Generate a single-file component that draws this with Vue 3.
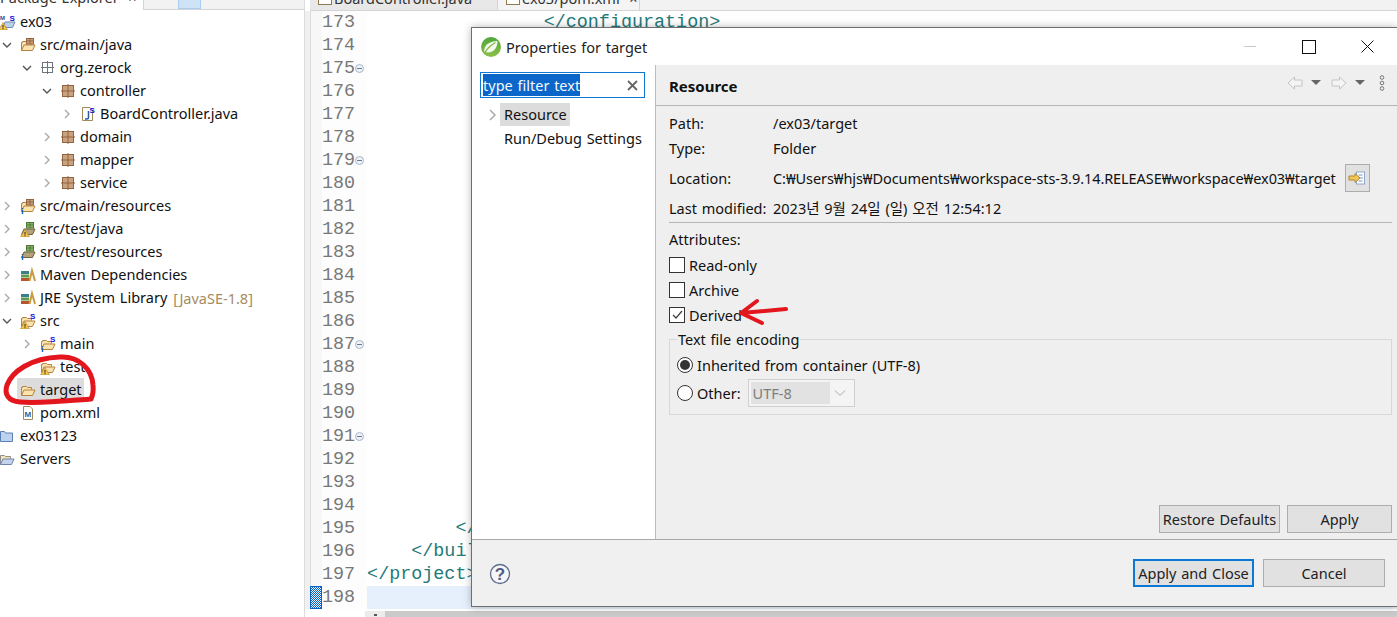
<script setup>
const tree = [
  { d: 0, t: 'ex03', i: 'project', chev: '' },
  { d: 1, t: 'src/main/java', i: 'srcopen', chev: 'down' },
  { d: 2, t: 'org.zerock', i: 'pkgempty', chev: 'down' },
  { d: 3, t: 'controller', i: 'pkg', chev: 'down' },
  { d: 4, t: 'BoardController.java', i: 'java', chev: 'right' },
  { d: 3, t: 'domain', i: 'pkg', chev: 'right' },
  { d: 3, t: 'mapper', i: 'pkg', chev: 'right' },
  { d: 3, t: 'service', i: 'pkg', chev: 'right' },
  { d: 1, t: 'src/main/resources', i: 'srcres', chev: 'right' },
  { d: 1, t: 'src/test/java', i: 'testwarn', chev: 'right' },
  { d: 1, t: 'src/test/resources', i: 'testres', chev: 'right' },
  { d: 1, t: 'Maven Dependencies', i: 'lib', chev: 'right' },
  { d: 1, t: 'JRE System Library', extra: '[JavaSE-1.8]', i: 'lib', chev: 'right' },
  { d: 1, t: 'src', i: 'srcfolder', chev: 'down' },
  { d: 2, t: 'main', i: 'mainfolder', chev: 'right' },
  { d: 2, t: 'test', i: 'testfolder', chev: '' },
  { d: 1, t: 'target', i: 'folder', chev: '', sel: true },
  { d: 1, t: 'pom.xml', i: 'pom', chev: '' },
  { d: 0, t: 'ex03123', i: 'bluefolder', chev: '' },
  { d: 0, t: 'Servers', i: 'servers', chev: '' }
]

const code = { 173: ['</configuration>', 16], 195: ['</', 8], 196: ['</buil', 4], 197: ['</project>', 0] }
const folds = [175, 179, 187, 191]
const lines = []
for (let n = 173; n <= 198; n++) {
  lines.push({ n, text: code[n] ? code[n][0] : '', indent: code[n] ? code[n][1] : 0, fold: folds.includes(n), cur: n === 198 })
}

const info = [
  { k: 'Path:', v: '/ex03/target', h: 25 },
  { k: 'Type:', v: 'Folder', h: 25 },
  { k: 'Location:', v: 'C:₩Users₩hjs₩Documents₩workspace-sts-3.9.14.RELEASE₩workspace₩ex03₩target', h: 35, btn: true },
  { k: 'Last modified:', v: '2023년 9월 24일 (일) 오전 12:54:12', h: 25 }
]
const checks = [
  { t: 'Read-only', on: false },
  { t: 'Archive', on: false },
  { t: 'Derived', on: true }
]
</script>

<template>
  <div class="screen">
    <svg class="defs" width="0" height="0" aria-hidden="true">
      <defs>
        <symbol id="open" viewBox="0 0 16 16">
          <path d="M1.500 13.500V5.500h1V4.500h4l1 1h4v2" fill="#f7e2b0" stroke="#b5823e" />
          <path d="M1.500 13.500 4 8h11l-2.500 5.500z" fill="#fbe3ae" stroke="#b5823e" />
        </symbol>
        <symbol id="grid" viewBox="0 0 16 16">
          <rect x="2.500" y="2.500" width="11" height="11" fill="#c9a27f" stroke="#93643f" />
          <path d="M8 1v14M1 8h14" stroke="#93643f" />
        </symbol>
        <symbol id="warn" viewBox="0 0 16 16">
          <path d="M5 8.500 9.500 16H.5z" fill="#f5c54c" stroke="#a9853a" stroke-width=".6" />
          <path d="M5 11v2.600M5 14.200v1" stroke="#222" />
        </symbol>
        <symbol id="inf" viewBox="0 0 16 16">
          <path d="M2.500 10v1M2.500 12v4" stroke="#1a62b8" stroke-width="1.400" />
        </symbol>
      </defs>
    </svg>

    <aside class="explorer">
      <div class="ptabs">
        <div class="ptab"><span class="ptab-text">Package Explorer&nbsp; ×</span></div>
        <div class="ptool"><span class="ptool-btn"></span></div>
      </div>
      <ul class="tree">
        <li v-for="row in tree" :key="row.t" class="row" :style="{ paddingLeft: 20 * Math.max(row.d - 1, 0) + 'px' }">
          <span v-if="row.d > 0" class="chev">
            <svg v-if="row.chev === 'down'" width="12" height="12" viewBox="0 0 12 12"><path d="M2 4l4 4 4-4" fill="none" stroke="#555" stroke-width="1.400" /></svg>
            <svg v-else-if="row.chev === 'right'" width="12" height="12" viewBox="0 0 12 12"><path d="M4 2l4 4-4 4" fill="none" stroke="#aaa" stroke-width="1.400" /></svg>
          </span>
          <span class="icon">
            <svg width="16" height="16" viewBox="0 0 16 16">
              <template v-if="row.i === 'project'">
                <path d="M3 13.500 5 8h10l-2.500 5.500z" fill="#bcd0ea" stroke="#6f8bb2" />
                <text x="0" y="6" class="mini" fill="#2c4f8f">M</text>
                <text x="9.500" y="6.500" class="badge">S</text>
                <use href="#warn" width="16" height="16" x="-2" y="0" />
              </template>
              <template v-else-if="row.i === 'srcopen'">
                <use href="#open" width="16" height="16" />
                <rect x="6.500" y="1.500" width="7" height="5.500" fill="#c9a27f" stroke="#93643f" />
                <path d="M10 1.500v5.500M6.500 4h7" stroke="#93643f" />
              </template>
              <template v-else-if="row.i === 'srcres'">
                <use href="#open" width="16" height="16" />
                <rect x="6.500" y="1.500" width="7" height="5.500" fill="#c9a27f" stroke="#93643f" />
                <path d="M10 1.500v5.500M6.500 4h7" stroke="#93643f" />
                <use href="#inf" width="16" height="16" />
              </template>
              <template v-else-if="row.i === 'testwarn' || row.i === 'testres'">
                <path d="M1.500 13.500 4 8h11l-2.500 5.500z" fill="#b3a27a" stroke="#71603c" />
                <rect x="6.500" y="1.500" width="7" height="5.500" fill="#8fb36b" stroke="#4f7a34" />
                <path d="M10 1.500v5.500M6.500 4h7" stroke="#4f7a34" />
                <use v-if="row.i === 'testwarn'" href="#warn" width="16" height="16" />
                <use v-else href="#inf" width="16" height="16" />
              </template>
              <template v-else-if="row.i === 'pkgempty'">
                <rect x="2.500" y="2.500" width="10" height="10" fill="none" stroke="#6e7480" />
                <path d="M7.500 1v13M1 7.500h13" stroke="#6e7480" />
              </template>
              <template v-else-if="row.i === 'pkg'">
                <use href="#grid" width="16" height="16" />
              </template>
              <template v-else-if="row.i === 'java'">
                <path d="M2.500 1.500h7.500l2.500 2.500v10.500h-10z" fill="#fff" stroke="#a08a5c" />
                <path d="M8.500 5v6.500q0 1.500-1.500 1.500H5" fill="none" stroke="#2d5d9c" stroke-width="1.500" />
                <text x="9.500" y="6.500" class="badge">S</text>
              </template>
              <template v-else-if="row.i === 'lib'">
                <rect x="1" y="4" width="8" height="3" fill="#3b7f8c" />
                <rect x="1" y="7.500" width="8" height="3" fill="#5d9b4b" />
                <rect x="1" y="11" width="9" height="3" fill="#b5552b" />
                <path d="M9.500 14 12 3.500 15 14" fill="none" stroke="#c89b3c" stroke-width="2" />
              </template>
              <template v-else-if="row.i === 'srcfolder' || row.i === 'mainfolder' || row.i === 'testfolder'">
                <use href="#open" width="16" height="16" />
                <text v-if="row.i !== 'testfolder'" x="10" y="6" class="badge">S</text>
                <use v-if="row.i === 'srcfolder' || row.i === 'testfolder'" href="#warn" width="16" height="16" />
                <use v-if="row.i === 'mainfolder'" href="#inf" width="16" height="16" />
              </template>
              <template v-else-if="row.i === 'folder'">
                <use href="#open" width="16" height="16" />
              </template>
              <template v-else-if="row.i === 'pom'">
                <path d="M3.500 1.500h6.500l2.500 2.500v10.500h-9z" fill="#fff" stroke="#a08a5c" />
                <text x="4.500" y="12" class="mini pomm" fill="#2c5fa0">M</text>
              </template>
              <template v-else-if="row.i === 'bluefolder'">
                <path d="M.5 13.500V3.500h4l1 1.500h7v8.500z" fill="#bcd3f0" stroke="#5b7fb3" />
              </template>
              <template v-else>
                <path d="M.5 13.500V4.500h4l1 1h5v2" fill="#f4e2b5" stroke="#8f8f8f" />
                <path d="M.5 13.500 3 8h11l-2.500 5.500z" fill="#c4d4ee" stroke="#6f84a8" />
              </template>
            </svg>
          </span>
          <span class="label" :class="{ sel: row.sel }">{{ row.t }}</span>
          <span v-if="row.extra" class="deco">{{ row.extra }}</span>
        </li>
      </ul>
    </aside>

    <main class="editor">
      <div class="etabs">
        <div class="etab">
          <i class="tab-ic"></i>
          <span class="etab-text">BoardController.java</span>
        </div>
        <div class="etab active">
          <i class="tab-ic"></i>
          <span class="etab-text">ex03/pom.xml&nbsp; ×</span>
        </div>
      </div>
      <div class="lines">
        <div v-for="l in lines" :key="l.n" class="line">
          <span class="ruler" :class="{ mark: l.cur }"></span>
          <span class="num">{{ l.n }}</span>
          <span class="foldc"><i v-if="l.fold" class="fold"></i></span>
          <span class="code" :class="{ cur: l.cur }">{{ ' '.repeat(l.indent) + l.text }}</span>
        </div>
      </div>
      <div class="hscroll">
        <span class="hs-blank"></span>
        <span class="hs-arrow"><i></i></span>
        <span class="hs-track"></span>
      </div>
    </main>

    <section class="dialog">
      <header class="titlebar">
        <svg class="logo" width="22" height="22" viewBox="0 0 22 22">
          <defs>
            <linearGradient id="springg" x1="0" y1="0" x2="0" y2="1">
              <stop offset="0" stop-color="#4fa63a" />
              <stop offset="1" stop-color="#8cc04a" />
            </linearGradient>
          </defs>
          <circle cx="11" cy="11" r="10" fill="url(#springg)" />
          <path d="M4.500 16C3 10 9 5 17.500 5c0 7-4 11.500-9.500 11.500-1.300 0-2.500-.2-3.500-.5z" fill="#f4f9ec" />
          <path d="M5 16.500c2.500-4.500 6-7.500 10.500-10" fill="none" stroke="#7cb342" stroke-width="1.200" />
        </svg>
        <span class="title">Properties for target</span>
        <span class="winctl">
          <span class="wbtn"><i class="w-min"></i></span>
          <span class="wbtn"><i class="w-max"></i></span>
          <span class="wbtn">
            <svg width="13" height="13" viewBox="0 0 13 13"><path d="M.5.5l12 12M12.500.5l-12 12" stroke="#111" fill="none" /></svg>
          </span>
        </span>
      </header>

      <div class="dbody">
        <nav class="side">
          <div class="filter">
            <span class="filter-text">type filter text</span>
            <svg width="11" height="11" viewBox="0 0 11 11"><path d="M1 1l9 9M10 1l-9 9" stroke="#666" stroke-width="1.800" /></svg>
          </div>
          <div class="nav-row">
            <svg class="nav-chev" width="12" height="14" viewBox="0 0 12 14"><path d="M3 2l5 5-5 5" fill="none" stroke="#aaa" stroke-width="1.500" /></svg>
            <span class="nav-sel">Resource</span>
          </div>
          <div class="nav-row"><span class="nav-plain">Run/Debug Settings</span></div>
        </nav>

        <div class="pane">
          <div class="phead">
            <strong>Resource</strong>
            <span class="ptools">
              <svg width="16" height="14" viewBox="0 0 16 14"><path d="M7.500 1 1 7l6.500 6V10H15V4H7.500z" fill="#f4f4f4" stroke="#c4c4c4" /></svg>
              <i class="tri"></i>
              <svg width="16" height="14" viewBox="0 0 16 14"><path d="M8.500 1 15 7l-6.500 6V10H1V4h7.500z" fill="#f4f4f4" stroke="#c4c4c4" /></svg>
              <i class="tri"></i>
              <svg class="dots" width="6" height="16" viewBox="0 0 6 16"><circle cx="3" cy="2.500" r="1.800" fill="none" stroke="#777" /><circle cx="3" cy="8" r="1.800" fill="none" stroke="#777" /><circle cx="3" cy="13.500" r="1.800" fill="none" stroke="#777" /></svg>
            </span>
          </div>

          <div class="pcontent">
            <div class="info">
              <div v-for="r in info" :key="r.k" class="irow" :style="{ height: r.h + 'px' }">
                <span class="ikey">{{ r.k }}</span>
                <span class="ival" :class="{ tight: r.btn }">{{ r.v }}</span>
                <span v-if="r.btn" class="ibtn">
                  <svg width="18" height="14" viewBox="0 0 18 14">
                    <rect x="8.500" y="1" width="8" height="12" fill="#fff" stroke="#8fa8c8" />
                    <path d="M10.500 4h4M12 7h3M10.500 10h4" stroke="#7a93b5" />
                    <path d="M1 5h6V2.500L12 7l-5 4.500V9H1z" fill="#f1c65a" stroke="#b5862a" />
                  </svg>
                </span>
              </div>
            </div>
            <div class="sep"></div>
            <div class="attr-title">Attributes:</div>
            <label v-for="c in checks" :key="c.t" class="chk">
              <span class="box">
                <svg v-if="c.on" width="13" height="13" viewBox="0 0 13 13"><path d="M2 7l3 3 6-7" fill="none" stroke="#444" stroke-width="1.300" /></svg>
              </span>
              {{ c.t }}
            </label>

            <fieldset class="group">
              <legend>Text file encoding</legend>
              <div class="radio-row first">
                <span class="radio on"></span>
                <span>Inherited from container (UTF-8)</span>
              </div>
              <div class="radio-row">
                <span class="radio"></span>
                <span class="other">Other:</span>
                <span class="combo">
                  <span class="combo-v">UTF-8</span>
                  <svg width="12" height="12" viewBox="0 0 12 12"><path d="M1 3.500l5 5 5-5" fill="none" stroke="#aaa" /></svg>
                </span>
              </div>
            </fieldset>

            <div class="pbtns">
              <span class="btn restore">Restore Defaults</span>
              <span class="btn apply">Apply</span>
            </div>
          </div>
        </div>
      </div>

      <footer class="dfoot">
        <svg class="help" width="22" height="22" viewBox="0 0 22 22">
          <circle cx="11" cy="11" r="9.500" fill="#f6f6f8" stroke="#5d6b8c" stroke-width="1.300" />
          <text x="11" y="16.500" text-anchor="middle" class="helpq">?</text>
        </svg>
        <span class="fbtns">
          <span class="btn primary">Apply and Close</span>
          <span class="btn cancel">Cancel</span>
        </span>
      </footer>
    </section>

    <svg class="ink" width="1397" height="617" viewBox="0 0 1397 617">
      <path d="M91 399C75 400 40 404 20 402 8 401 4 394 7 385 12 372 30 358 60 357 80 356 92 370 93 385 93.500 390 93 395 91 399" fill="none" stroke="#e3161d" stroke-width="5" stroke-linecap="round" stroke-linejoin="round" />
      <path d="M786 309 741 313M757 301 741 313 762 323" fill="none" stroke="#e3161d" stroke-width="4" stroke-linecap="round" stroke-linejoin="round" />
    </svg>
  </div>
</template>

<style>
html, body { margin: 0; background: #fff; overflow: hidden; }
</style>

<style scoped>
.screen {
  position: relative;
  display: flex;
  width: 1397px;
  height: 617px;
  overflow: hidden;
  background: #fff;
  font-family: "Noto Sans", "Noto Sans CJK KR", sans-serif;
  font-size: 14.5px;
  word-spacing: 1px;
  color: #111;
}
.defs, .ink { position: absolute; left: 0; top: 0; }
.ink { pointer-events: none; }

.explorer { flex: 0 0 304px; }
.ptabs { display: flex; height: 10px; }
.ptab { width: 143px; overflow: hidden; border-right: 1px solid #d4d4d4; }
.ptab-text { display: block; margin-top: -14px; white-space: nowrap; line-height: 22px; color: #333; }
.ptool { flex: 1; background: #f2f2f2; border-bottom: 1px solid #d4d4d4; padding-left: 34px; }
.ptool-btn { display: block; width: 23px; height: 9px; background: #cfe3f7; border: 1px solid #a8cdf0; border-top: 0; box-sizing: border-box; }
.tree { list-style: none; margin: 0; padding: 0; }
.row { display: flex; align-items: center; height: 23px; white-space: nowrap; }
.chev { flex: 0 0 20px; height: 12px; display: flex; padding-left: 1px; box-sizing: border-box; }
.icon { flex: 0 0 20px; height: 16px; position: relative; z-index: 1; }
.icon svg { display: block; overflow: visible; }
.label { padding: 0 1px; line-height: 23px; margin-left: -1px; }
.label.sel { background: #dcdcdc; padding: 0 2px 0 23px; margin-left: -23px; }
.deco { color: #a58b5f; margin-left: 5px; }
.mini { font: bold 6px "Liberation Sans", sans-serif; }
.pomm { font-size: 8px; }
.badge { font: bold 8px "Liberation Sans", sans-serif; fill: #1010d8; }

.editor { flex: 1; background: #fff; display: flex; flex-direction: column; min-width: 0; border-left: 1px solid #dcdcdc; }
.etabs { flex: 0 0 11px; display: flex; background: #f2f2f2; margin-left: 5px; border-bottom: 1px solid #d4d4d4; box-sizing: border-box; }
.etab { width: 187px; display: flex; overflow: hidden; background: #e8e8e8; padding-left: 8px; box-sizing: border-box; }
.etab.active { background: #f4f4f4; width: 143px; border-left: 1px solid #d4d4d4; border-right: 1px solid #d4d4d4; }
.tab-ic { flex: none; width: 12px; height: 4px; border: 1px solid #8f7a50; border-top: 0; background: #fff; margin-right: 2px; box-sizing: content-box; }
.etab-text { display: block; margin-top: -13px; white-space: nowrap; line-height: 22px; color: #333; }
.lines { flex: none; background: linear-gradient(to right, #f0f0f0 5px, transparent 5px); padding-left: 5px; }
.line { display: flex; height: 23px; align-items: stretch; }
.ruler { flex: 0 0 12px; background: #f7f7f7; border-left: 1px solid #dcdcdc; box-sizing: border-box; }
.ruler.mark { background: repeating-conic-gradient(#0a5fc4 0 25%, #eaf2fc 0 50%) 0 0 / 2px 2px; border: 1px solid #0a5fc4; }
.num, .code { font-family: "Liberation Mono", monospace; font-size: 18.4px; line-height: 23px; word-spacing: 0; }
.num { flex: 0 0 33px; color: #787878; background: #fdfdfd; }
.foldc { flex: 0 0 12px; display: flex; align-items: center; background: #fdfdfd; }
.fold { width: 9px; height: 9px; border: 1px solid #a9b6c8; border-radius: 50%; box-sizing: border-box; position: relative; background: #eef1f6; }
.fold::after { content: ""; position: absolute; left: 1px; right: 1px; top: 3px; height: 1px; background: #687a96; }
.code { flex: 1; white-space: pre; color: #1f7a7a; }
.code.cur { background: #e6f0fc; }
.hscroll { flex: 1; display: flex; margin-left: 5px; padding-top: 2px; }
.hs-blank { width: 55px; }
.hs-arrow { width: 20px; background: #ececec; display: flex; justify-content: center; }
.hs-arrow i { width: 3px; height: 2px; margin-top: 3px; background: #555; }
.hs-track { flex: 1; background: #cacaca; }

.dialog {
  position: absolute;
  left: 471px;
  top: 27px;
  width: 926px;
  height: 580px;
  box-sizing: border-box;
  background: #f0f0f0;
  border: 1px solid #6e6e6e;
  border-right: 0;
  display: flex;
  flex-direction: column;
  box-shadow: 0 0 8px rgba(0, 0, 0, .28);
}
.titlebar { flex: 0 0 37px; background: #fff; display: flex; align-items: center; padding-left: 8px; }
.logo { margin-right: 4px; }
.title { color: #222; }
.winctl { margin-left: auto; display: flex; }
.wbtn { width: 59px; height: 37px; display: flex; align-items: center; justify-content: center; }
.w-min { width: 12px; height: 1px; background: #c8c8c8; }
.w-max { width: 12px; height: 12px; border: 1px solid #111; }

.dbody { flex: 1; display: flex; min-height: 0; border-bottom: 1px solid #a8a8a8; }
.side { flex: 0 0 184px; background: #fff; border-right: 1px solid #bcbcbc; padding: 7px 0 0 8px; box-sizing: border-box; }
.filter { width: 165px; height: 26px; box-sizing: border-box; border: 1px solid #0a78d4; display: flex; align-items: center; justify-content: space-between; padding: 0 6px 0 2px; margin-bottom: 5px; }
.filter-text { background: #0a66c8; color: #f4f8ff; line-height: 22px; }
.nav-row { height: 23px; display: flex; align-items: center; padding-left: 24px; position: relative; }
.nav-chev { position: absolute; left: 7px; top: 5px; }
.nav-sel { background: #dcdcdc; padding: 0 3px 0 4px; margin-left: -4px; line-height: 23px; }

.pane { flex: 1; background: #efefef; display: flex; flex-direction: column; min-width: 0; }
.phead { flex: 0 0 41px; box-sizing: border-box; border-bottom: 1px solid #b5b5b5; display: flex; align-items: center; padding: 1px 12px 0 13px; }
.phead strong { font-weight: 700; font-size: 15px; }
.ptools { margin-left: auto; display: flex; align-items: center; gap: 8px; margin-top: -6px; }
.tri { width: 0; height: 0; border: 5px solid transparent; border-top: 5px solid #666; border-bottom: 0; margin-right: 2px; }
.dots { margin-left: 4px; }
.pcontent { flex: 1; padding: 4px 5px 0 13px; display: flex; flex-direction: column; min-height: 0; }
.irow { display: flex; align-items: center; white-space: nowrap; }
.ikey { flex: 0 0 104px; }
.ival { flex: none; }
.ival.tight { letter-spacing: -.08px; }
.ibtn { margin-left: 9px; width: 25px; height: 28px; box-sizing: border-box; border: 1px solid #adadad; background: #e1e1e1; display: flex; align-items: center; justify-content: center; }
.sep { height: 1px; background: #b5b5b5; margin-top: 2px; }
.attr-title { height: 25px; line-height: 33px; }
.chk { display: flex; align-items: center; height: 25px; }
.attr-title + .chk { margin-top: 4px; }
.box { width: 16px; height: 16px; box-sizing: border-box; border: 1px solid #333; background: #fff; margin-right: 4px; display: flex; align-items: center; justify-content: center; }
.group { margin: 3px 0 0; padding: 0 8px 0 7px; border: 1px solid #d8d8d8; height: 85px; box-sizing: border-box; }
.group legend { padding: 0 1px; line-height: 19px; }
.radio-row { display: flex; align-items: center; height: 25px; }
.radio-row.first { margin-top: 3px; }
.radio-row + .radio-row { height: 32px; }
.radio { width: 16px; height: 16px; box-sizing: border-box; border: 1px solid #333; border-radius: 50%; background: #fff; margin-right: 4px; position: relative; }
.radio.on::after { content: ""; position: absolute; inset: 2px; border-radius: 50%; background: #333; }
.other { margin-right: 7px; }
.combo { width: 107px; height: 28px; box-sizing: border-box; border: 1px solid #cfcfcf; background: #f4f4f4; display: flex; align-items: center; padding: 2px 8px 2px 2px; justify-content: space-between; }
.combo-v { background: #e2e2e2; color: #7d7d7d; width: 79px; height: 22px; line-height: 22px; padding-left: 2px; box-sizing: border-box; }
.pbtns { margin-top: auto; display: flex; justify-content: flex-end; gap: 7px; margin-bottom: 6px; }
.btn { height: 28px; line-height: 26px; box-sizing: border-box; border: 1px solid #adadad; background: #e1e1e1; text-align: center; white-space: nowrap; color: #222; }
.restore { width: 121px; }
.apply { width: 105px; }

.dfoot { flex: 0 0 66px; display: flex; align-items: center; padding: 0 12px 0 17px; background: #f0f0f0; }
.help { flex: none; margin-top: 1px; }
.helpq { font: bold 17px "Liberation Sans", sans-serif; fill: #4f5d80; }
.fbtns { margin-left: auto; display: flex; gap: 9px; }
.primary { width: 121px; border: 2px solid #0a78d4; line-height: 24px; }
.cancel { width: 122px; }
</style>
